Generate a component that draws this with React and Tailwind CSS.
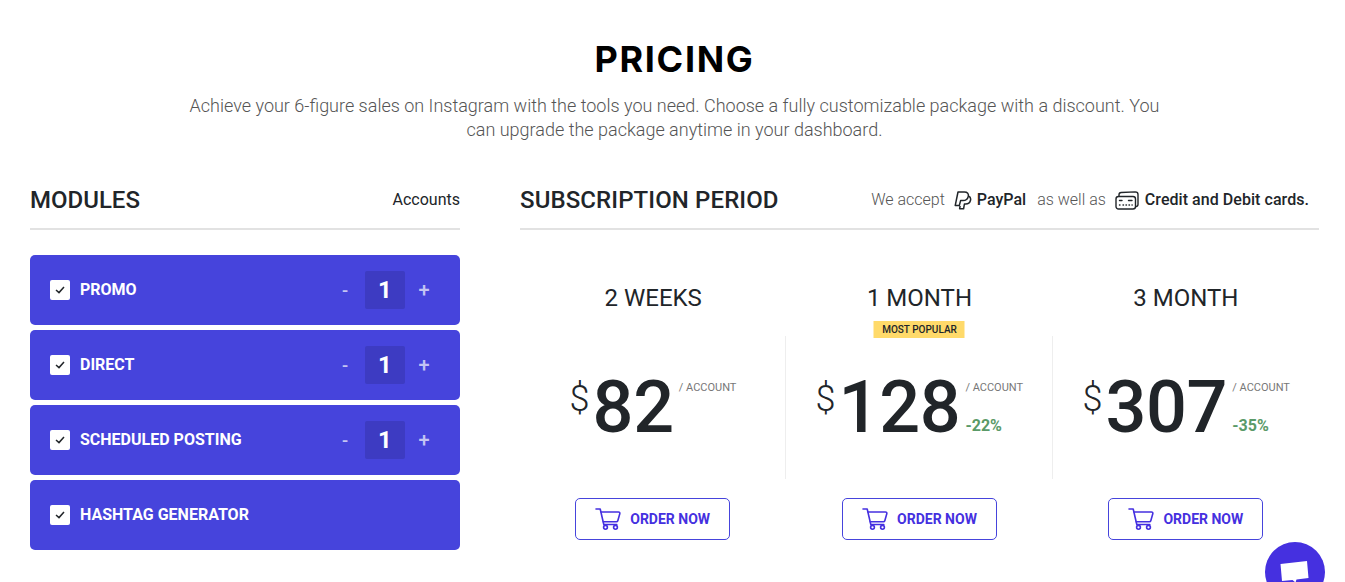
import React from "react";

const modules = [
  { name: "PROMO", counter: true },
  { name: "DIRECT", counter: true },
  { name: "SCHEDULED POSTING", counter: true },
  { name: "HASHTAG GENERATOR", counter: false },
];

const plans = [
  { period: "2 WEEKS", price: "82" },
  { period: "1 MONTH", price: "128", off: "-22%", popular: true },
  { period: "3 MONTH", price: "307", off: "-35%" },
];

function CartIcon() {
  return (
    <svg width="26" height="22" viewBox="0 0 26 22" fill="none" stroke="#4530e0" strokeWidth="1.6" strokeLinecap="round" strokeLinejoin="round">
      <path d="M1 1h4.2l3.6 15.5h13" />
      <path d="M6 4h17.5c1 0 1.6.7 1.3 1.7l-2 7c-.2.7-.7 1-1.4 1H8.2" />
      <circle cx="10.5" cy="19.3" r="1.9" />
      <circle cx="20.5" cy="19.3" r="1.9" />
    </svg>
  );
}

function PaypalIcon() {
  return (
    <svg width="18" height="19" viewBox="0 0 18 19" fill="none" stroke="#212529" strokeWidth="1.5" strokeLinejoin="round">
      <path d="M4 1h6.4c3 0 4.5 1.7 3.9 4.4-.6 2.8-2.7 4.2-5.4 4.2H6.6L5.3 14.6H1.2L4 1z" />
      <path d="M14.4 5c1.8.8 2.6 2.2 2.1 4.2-.6 2.5-2.4 3.8-4.8 3.8h-1.3L9.6 17.800H5.6l.5-3" />
    </svg>
  );
}

function CardIcon() {
  return (
    <svg width="24" height="19" viewBox="0 0 24 19" fill="none" stroke="#212529" strokeWidth="1.4" strokeLinecap="round">
      <rect x="1" y="5.5" width="19.5" height="12.5" rx="2.5" />
      <path d="M4 5.2V3.8C4 2.4 5 1.6 6.2 1.5l14-.6c1.6 0 2.8 1 2.8 2.6v10c0 1.2-.8 2-2.3 2.2" />
      <path d="M4.5 9.5h2.5M13.5 9.5h3.5M4.5 14h.5M8 14h.5M11 14h.5M14 14h.5M17 14h.2" />
    </svg>
  );
}

function ModuleRow({ name, counter }) {
  return (
    <div className="h-[70px] bg-[#4644dc] rounded-[5px] flex items-center pl-5 pr-[30px]">
      <span className="w-5 h-5 bg-white rounded-[2px] flex items-center justify-center">
        <svg width="10" height="8" viewBox="0 0 10 8" fill="none" stroke="#212529" strokeWidth="1.5">
          <path d="M1 4l3 2.6L9 1" />
        </svg>
      </span>
      <span className="ml-2.5 text-white font-bold text-[16px] -mt-px">{name}</span>
      {counter && (
        <div className="ml-auto flex items-center">
          <span className="text-[#c3c3f3] text-[18px] font-medium">-</span>
          <span className="ml-[17px] w-10 h-[38px] bg-[#3d3bc2] rounded-[2px] flex items-center justify-center text-white text-[24px] font-bold">1</span>
          <span className="ml-[13px] text-[#c3c3f3] text-[20px] font-medium w-[12px] text-center">+</span>
        </div>
      )}
    </div>
  );
}

function Plan({ period, price, off, popular, index }) {
  return (
    <div className="flex flex-col items-center">
      <div className="relative h-[70px] pt-[32px] w-full text-center text-[24px] leading-[36px] text-[#212529]">
        {period}
        {popular && (
          <span className="absolute left-1/2 -translate-x-1/2 top-[73px] h-[17px] w-[91px] bg-[#ffda6a] text-[10px] font-medium leading-[17px] text-[#212529] whitespace-nowrap">
            MOST POPULAR
          </span>
        )}
      </div>
      <div className={`w-full h-[143px] mt-[18px] flex justify-center ${index < 2 ? "border-r border-[#eeeeee]" : ""}`}>
        <div className="flex items-start pt-[30px]">
          <span className="text-[36px] leading-[66px] font-light text-[#212529] mr-[3px]">$</span>
          <span className="text-[72px] leading-[84px] font-medium text-[#212529] tracking-[-0.3px]">{price}</span>
          <div className="ml-[5px] pt-[15px] w-[57px]">
            <div className="text-[11px] leading-[14px] text-[#777777] whitespace-nowrap">/ ACCOUNT</div>
            {off && <div className="mt-[21px] text-[16px] leading-[20px] font-bold text-[#5a9a68]">{off}</div>}
          </div>
        </div>
      </div>
      <button className={`mt-[19px] w-[155px] h-[42px] rounded-[5px] border border-[#4644dc] bg-white flex items-center justify-center gap-[9px] text-[14px] font-bold text-[#4530e0] ${index === 0 ? "-ml-px" : ""}`}>
        <CartIcon />
        ORDER NOW
      </button>
    </div>
  );
}

export default function App() {
  return (
    <div className="relative h-[582px] overflow-hidden bg-white font-['Roboto',sans-serif] text-[#212529]">
      <div className="text-center pt-[34px] pl-[4px]">
        <h1 className="text-[36px] leading-[50px] font-bold text-black font-['Inter',sans-serif] tracking-[1.7px]">PRICING</h1>
        <p className="mt-[10px] mx-auto w-[1000px] text-[18px] leading-[24px] font-light text-[#555555]">
          Achieve your 6-figure sales on Instagram with the tools you need. Choose a fully customizable package with a discount. You can upgrade the package anytime in your dashboard.
        </p>
      </div>

      <div className="mt-[37px] flex pl-[30px] pr-[26px]">
        <div className="w-[430px]">
          <div className="h-[51px] flex items-center justify-between border-b-2 border-[#e2e2e2] pb-[7px]">
            <h2 className="text-[24px] font-medium">MODULES</h2>
            <span className="text-[16px]">Accounts</span>
          </div>
          <div className="mt-[25px] flex flex-col gap-[5px]">
            {modules.map((m) => (
              <ModuleRow key={m.name} {...m} />
            ))}
          </div>
        </div>

        <div className="ml-[60px] flex-1">
          <div className="h-[51px] flex items-center border-b-2 border-[#e2e2e2] pb-[7px]">
            <h2 className="text-[24px] font-medium tracking-[0.1px]">SUBSCRIPTION PERIOD</h2>
            <div className="ml-auto mr-[10px] flex items-center text-[16px]">
              <span className="font-light text-[#555555]">We accept</span>
              <span className="ml-[9px]"><PaypalIcon /></span>
              <span className="ml-[5px] font-medium">PayPal</span>
              <span className="ml-[11px] font-light text-[#555555]">as well as</span>
              <span className="ml-[9px]"><CardIcon /></span>
              <span className="ml-[6px] font-medium tracking-[0.05px]">Credit and Debit cards.</span>
            </div>
          </div>
          <div className="mt-[18px] grid grid-cols-3">
            {plans.map((p, i) => (
              <Plan key={p.period} index={i} {...p} />
            ))}
          </div>
        </div>
      </div>

      {/* chat bubble */}
      <div className="absolute left-[1265px] top-[542px] w-[60px] h-[60px] rounded-full bg-[#4530e0]">
        <svg className="absolute left-0 top-0" width="60" height="60" viewBox="0 0 60 60" fill="white">
          <path d="M15.5 22L42 19l1.500 17-12 1.500-1 3-3-2.500-10.500 1z" />
        </svg>
      </div>
    </div>
  );
}
